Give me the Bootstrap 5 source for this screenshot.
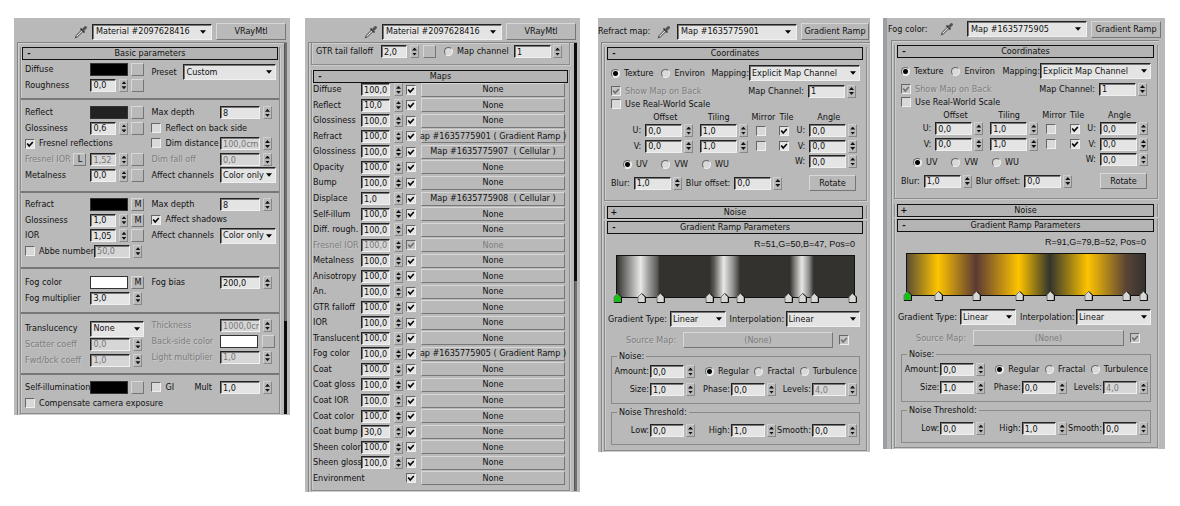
<!DOCTYPE html>
<html lang="en">
<head>
<meta charset="utf-8">
<meta name="viewport" content="width=device-width, initial-scale=1">
<title>VRayMtl material settings</title>
<link href="https://cdn.jsdelivr.net/npm/bootstrap@5.3.0/dist/css/bootstrap.min.css" rel="stylesheet">
<style>
  :root {
    --face: #b9b9b9;
    --field: #e4e4e4;
    --ink: #111;
    --off: #7e7e7e;
  }
  body {
    background: #fff;
    color: var(--ink);
    font-family: "DejaVu Sans Condensed", "Noto Sans", sans-serif;
    font-size: 9px;
    line-height: 11px;
  }
  .board {
    display: grid;
    grid-template-columns: 276fr 15px 275fr 18px 272fr 13px 282fr;
    align-items: start;
    padding: 18px 15px 14px 14px;
  }
  .board > .panel:nth-child(1) { grid-column: 1; }
  .board > .panel:nth-child(2) { grid-column: 3; }
  .board > .panel:nth-child(3) { grid-column: 5; }
  .board > .panel:nth-child(4) { grid-column: 7; }
  .panel { background: var(--face); min-width: 0; }
  label, .cap { white-space: nowrap; }
  .is-off { color: var(--off); text-shadow: 1px 1px 0 #c8c8c8; }

  /* toolbar */
  .toolbar-row { height: 24px; padding: 3px 4px 0 0; }
  .dropper { width: 14px; height: 14px; }
  .tb-select { width: 120px; flex: none; margin-right: 4px; }
  .tb-btn { width: 70px; height: 17px; flex: none; }

  /* controls */
  .form-control, .form-select {
    font-size: 9px; line-height: 11px; color: var(--ink);
    border-radius: 0; background-color: var(--field); min-width: 0;
    border: 1px solid; border-color: #222 #f0f0f0 #f0f0f0 #222;
    box-shadow: inset 1px 1px 0 #777;
  }
  .form-control { height: 13px; min-height: 0; padding: 0 0 0 2px; }
  .form-control:disabled { background: #d6d6d6; color: #777; }
  .form-select {
    height: 16px; padding: 0 0 0 2px;
    background-image: url("data:image/svg+xml,%3Csvg xmlns='http://www.w3.org/2000/svg' viewBox='0 0 7 4'%3E%3Cpath d='M0 0h7L3.500 4z'/%3E%3C/svg%3E");
    background-size: 6px 4px; background-position: right 3px center;
  }
  .tb-select { padding-left: 3px; background-position: right 5px center; }
  .btn {
    --bs-btn-border-radius: 0;
    --bs-btn-bg: var(--face);
    --bs-btn-disabled-bg: var(--face);
    --bs-btn-disabled-color: var(--off);
    --bs-btn-disabled-opacity: 1;
    --bs-btn-color: var(--ink);
    padding: 0; font-size: 9px; line-height: 11px; white-space: nowrap;
    border: 1px solid; border-color: #d8d8d8 #767676 #767676 #d8d8d8;
    background: var(--face);
  }
  .btn:disabled { border-color: #d8d8d8 #767676 #767676 #d8d8d8; }
  .btn-map { width: 13px; height: 13px; flex: none; }
  .numf { display: flex; gap: 2px; flex: none; align-items: center; }
  .numf > input { flex: 1 1 0; width: 0; }
  .spin {
    width: 9px; height: 13px; flex: none; display: flex; flex-direction: column; justify-content: center; gap: 2px;
    border: 1px solid; border-color: #d0d0d0 #888 #888 #d0d0d0;
  }
  .spin button { border: 0; padding: 0; background: none; height: 3px; width: 7px; display: block; }
  .spin button::before { content: ""; display: block; width: 5px; height: 3px; margin: 0 1px; background: #111; clip-path: polygon(50% 0, 100% 100%, 0 100%); }
  .spin button + button::before { clip-path: polygon(0 0, 100% 0, 50% 100%); }
  .form-check-input {
    width: 10px; height: 10px; margin: 0; float: none; flex: none; background-color: #d9d9d9;
    border: 1px solid; border-color: #666 #efefef #efefef #666; display: block;
  }
  .form-check-input[type=checkbox] { border-radius: 0; }
  .form-check-input:checked { background-color: #e4e4e4; border-color: #666 #efefef #efefef #666; }
  .form-check-input:checked[type=checkbox] { background-image: url("data:image/svg+xml,%3Csvg xmlns='http://www.w3.org/2000/svg' viewBox='0 0 10 10'%3E%3Cpath d='M1.500 4.500L4 7.500L8.500 2.500' fill='none' stroke='%23000' stroke-width='2'/%3E%3C/svg%3E"); background-size: 100%; }
  .form-check-input[type=radio] { width: 9px; height: 9px; }
  .form-check-input:checked[type=radio] { background-image: radial-gradient(circle, #000 2px, transparent 3px); background-size: 100%; }
  .form-check-input:disabled { opacity: 1; background-color: #c4c4c4; }
  .form-check-input:disabled:checked[type=checkbox] { background-image: url("data:image/svg+xml,%3Csvg xmlns='http://www.w3.org/2000/svg' viewBox='0 0 10 10'%3E%3Cpath d='M1.500 4.500L4 7.500L8.500 2.500' fill='none' stroke='%23707070' stroke-width='2'/%3E%3C/svg%3E"); }
  .form-check-input:disabled ~ label { opacity: 1; }
  .swatch { width: 38px; height: 13px; flex: none; padding: 0; border: 1px solid #333; background: #000; appearance: none; }
  .swatch::-webkit-color-swatch-wrapper { padding: 0; }
  .swatch::-webkit-color-swatch { border: 0; border-radius: 0; }

  /* rollouts */
  .frame { border: 1px solid #848484; border-width: 1px 0 0 1px; box-shadow: inset 1px 1px 0 #cfcfcf; margin: 0 3px; padding: 0 0 1px 2px; display: flex; gap: 4px; }
  .frame > .stack { flex: 1; min-width: 0; }
  .track { width: 3px; background: #707070; border-left: 1px solid #555; display: flex; flex-direction: column; }
  .thumb { height: 238px; background: #0c0c0c; margin-left: -1px; }
  .track.low .thumb { flex: 1; height: auto; margin-top: 278px; }
  .rollout { border: 1px solid #8b8b8b; border-top: 0; box-shadow: 1px 1px 0 #cdcdcd, inset 1px 0 0 #cdcdcd; }
  .rollout-head {
    display: grid; grid-template-columns: 12px 1fr 12px; width: calc(100% - 2px); margin: 0 1px;
    height: 13px; border: 1px solid #111; background: #b4b4b4; padding: 0; line-height: 11px; text-align: center; color: var(--ink);
  }
  .sign { font-weight: bold; }

  /* basic parameters */
  .sect { display: grid; grid-template-columns: 119fr 124fr; column-gap: 7px; padding: 5px 3px 0 4px; }
  .sect + .sect { border-top: 2px solid; border-image: linear-gradient(#777 50%, #c9c9c9 50%) 1; }
  .lines { display: grid; grid-auto-rows: minmax(0, 1fr); }
  .line { display: flex; align-items: center; min-width: 0; }
  .line > .lead-cap { flex: 1 1 0; min-width: 0; }
  .n2 { height: 31px; } .n3 { height: 47px; } .n4 { height: 62px; } .n5 { height: 78px; }
  .cell { width: 54px; flex: none; display: flex; align-items: center; gap: 3px; }
  .cell-r { width: 56px; flex: none; display: flex; align-items: center; }
  .w-s { width: 38px; gap: 3px; } .w-m { width: 52px; gap: 3px; } .w-c { width: 48px; }
  .w-sel { width: 56px; }
  .w-rest { flex: 1 1 0; gap: 3px; margin-right: 2px; }
  .s1 { padding-top: 2px; padding-bottom: 5px; }
  .s1 .preset-cap { width: 32px; flex: none; }
  .s1 .lines + .lines .line { height: 20px; }
  .s2 { padding-top: 5px; padding-bottom: 8px; }
  .s3 { padding-top: 4px; padding-bottom: 8px; }
  .s4 { padding-top: 6px; padding-bottom: 6px; }
  .s5 { padding-top: 7px; padding-bottom: 5px; }
  .s5 .lines + .lines { margin-top: -3px; }
  .s6 { padding-top: 5px; padding-bottom: 2px; }
  .s3 .lines + .lines { grid-template-rows: repeat(4, 1fr); }
  .s4 .lines + .lines, .s6 .lines + .lines { grid-template-rows: 1fr 1fr; }

  /* maps list */
  .gtr { height: 22px; padding: 0 7px 4px 4px; }
  .gtr-cap { flex: 0 0 65px; }
  .maps-roll { margin-top: 5px; }
  .map-list { display: grid; grid-auto-rows: minmax(0, 1fr); height: 404px; margin: -1px 0 4px; padding-left: 1px; }
  .map-line { display: grid; grid-template-columns: 48px 42px 3px 10px 5px 1fr; align-items: center; padding-right: 4px; }
  .map-line .numf { gap: 4px; }
  .map-line .btn { height: 14px; display: flex; justify-content: center; align-items: center; min-width: 0; }

  /* coordinates */
  .p-refr .frame { margin: 0 0 0 3px; }
  .p-refr .rollout { margin-right: 3px; }
  .p-refr .toolbar-row { padding-right: 1px; }
  .p-refr .tb-btn { width: 68px; }
  .p-refr .ramp-in { padding-bottom: 5px; }
  .p-fog { border-left: 4px solid #9a9fa3; }
  .p-fog .map-cap { padding-left: 1px; }
  .p-fog .toolbar-row { height: 22px; padding-top: 0; }
  .p-fog .frame { margin: 0 6px 0 4px; }
  .p-fog .rollout { margin-right: 1px; }
  .p-ramp .rollout-head { width: calc(100% - 5px); margin: 0 3px 0 2px; }
  .body-in { padding: 5px 6px 9px 6px; }
  .w-map { width: 111px; }
  .map-row { height: 16px; } .show-row { height: 14px; margin-top: 3px; } .real-row { height: 12px; margin-bottom: 2px; }
  .coord { display: grid; grid-template-columns: 35fr 56fr 53fr 19fr 18fr 16fr 52fr; grid-template-rows: 11px 15px 16px 15px; align-items: center; }
  .uv { grid-column: 1 / 6; align-self: end; gap: 14px; padding-left: 12px; margin-bottom: -1px; }
  .blur-row { height: 16px; margin-top: 6px; }
  .rotate { width: 47px; height: 16px; }
  .shut { margin-top: 5px; border-bottom: 0; }

  /* gradient ramp */
  .ramp-roll { margin-top: 2px; }
  .ramp-in { padding: 4px 6px 4px 3px; }
  .readout { font-family: "Liberation Sans", sans-serif; text-align: right; padding-right: 5px; line-height: 12px; }
  .ramp { position: relative; height: 43px; border: 1px solid #111; margin: 5px 5px 0 8px; }
  .stop { position: absolute; top: 37px; width: 9px; height: 10px; margin-left: -4px; display: block; }
  .type-row { margin-top: 13px; }
  .gt-cap { flex: 0 0 62px; } .ip-cap { flex: 0 0 60px; padding-left: 4px; }
  .sel-a { flex: 55 1 0; } .sel-b { flex: 75 1 0; }
  .src-row { margin-top: 5px; padding: 0 11px 0 18px; }
  .src-cap { width: 57px; flex: none; } .src-row .btn { height: 16px; } .src-row .form-check-input { margin-left: 6px; }
  fieldset { border: 1px solid #8a8a8a; margin: 0 0 0 3px; padding: 0 2px 0 0; }
  legend { float: none; width: auto; font-size: 9px; line-height: 10px; height: 10px; padding: 0 2px; margin: 0 0 0 5px; }
  .noise-grid { display: grid; grid-template-columns: 37fr 46px 35fr 46px 35fr 46px; align-items: center; }
  .noise-grid .numf { margin-left: 1px; }
  .noise-grid > label { justify-self: end; }
  .fs-noise { margin-top: 3px; height: 53px; } .fs-noise .noise-grid { margin-top: 4px; } .fs-noise .second { margin-top: 5px; }
  .fs-thr { margin-top: 3px; height: 38px; } .fs-thr .noise-grid { margin-top: 7px; }
  .kinds { grid-column: 3 / 7; display: flex; justify-content: space-between; padding-left: 10px; }
</style>
</head>
<body>
<main class="board" id="board"></main>

<script src="https://cdn.jsdelivr.net/npm/bootstrap@5.3.0/dist/js/bootstrap.bundle.min.js"></script>
<script>
  const dropper = `<svg class="dropper flex-shrink-0" viewBox="0 0 14 14" aria-hidden="true">
    <path d="M1.500 12.500L2.200 10.500L7.500 5L9 6.500L3.500 11.800Z" fill="#ddd" stroke="#444" stroke-width="1"/>
    <path d="M6.500 3.500L10.500 7.500" stroke="#222" stroke-width="1.500"/>
    <path d="M9 5L11.500 2.500" stroke="#555" stroke-width="3" stroke-linecap="round"/>
    <path d="M1 13.200L2 12.200" stroke="#333"/></svg>`;
  const off = d => d ? ' disabled' : '';
  const dim = d => d ? ' is-off' : '';
  const num = (id, v, cls, d, aria) => `<span class="numf ${cls}"><input type="text" class="form-control" id="${id}" value="${v}"${aria ? ` aria-label="${aria}"` : ''}${off(d)}><span class="spin"><button type="button" aria-label="Increase"></button><button type="button" aria-label="Decrease"></button></span></span>`;
  const select = (id, v, cls = '', aria = '') => `<select class="form-select ${cls}" id="${id}"${aria ? ` aria-label="${aria}"` : ''}><option>${v}</option></select>`;
  const mapBtn = (t = '') => `<button type="button" class="btn btn-map" aria-label="Map">${t}</button>`;
  const swatch = (id, c, d) => `<input type="color" class="swatch" id="${id}" value="${c}"${off(d)}>`;
  const lab = (id, t, cls = '') => `<label for="${id}" class="${cls}">${t}</label>`;
  const check = (id, t, on, d, gap = 'ms-1') => `<input type="checkbox" class="form-check-input" id="${id}"${on ? ' checked' : ''}${off(d)}>${lab(id, t, gap + dim(d))}`;
  const radio = (id, name, t, on) => `<span class="d-flex align-items-center gap-1"><input type="radio" class="form-check-input" name="${name}" id="${id}"${on ? ' checked' : ''}>${lab(id, t)}</span>`;
  const head = (t, sign = '-') => `<button type="button" class="rollout-head" aria-expanded="${sign === '-'}"><span class="sign">${sign}</span><span>${t}</span></button>`;
  const line = (...x) => `<div class="line">${x.join('')}</div>`;
  const left = (id, t, body, d) => line(lab(id, t, 'lead-cap' + dim(d)), `<span class="cell">${body}</span>`);
  const right = (id, t, body, d) => line(lab(id, t, 'lead-cap' + dim(d)), `<span class="cell-r">${body}</span>`);
  const sect = (n, l, r, pad = '') => `<div class="sect ${pad}"><div class="lines ${n}">${l.join('')}</div><div class="lines ${n}">${r.join('')}</div></div>`;
  const bar = (p, name, type) => `<div class="toolbar-row d-flex align-items-center">
      <span class="flex-grow-1 d-flex justify-content-end pe-1">${dropper}</span>
      ${select(p + 'name', name, 'tb-select', 'Name')}
      <button type="button" class="btn tb-btn">${type}</button></div>`;

  const basic = `<section class="panel p-basic">${bar('b', 'Material #2097628416', 'VRayMtl')}
    <div class="frame"><div class="stack pt-1"><div class="rollout">${head('Basic parameters')}
    ${sect('n2', [
      left('diff', 'Diffuse', swatch('diff', '#000000') + mapBtn()),
      left('rough', 'Roughness', num('rough', '0,0', 'w-s') + mapBtn())
    ], [ line(lab('preset', 'Preset', 'preset-cap'), select('preset', 'Custom')) ], 's1')}
    ${sect('n5', [
      left('refl', 'Reflect', swatch('refl', '#222222') + mapBtn()),
      left('rgl', 'Glossiness', num('rgl', '0,6', 'w-s') + mapBtn()),
      line(check('fres', 'Fresnel reflections', 1)),
      line(lab('fior', 'Fresnel IOR', 'lead-cap is-off'), '<button type="button" class="btn btn-map me-1">L</button>', `<span class="cell">${num('fior', '1,52', 'w-s', 1)}${mapBtn()}</span>`),
      left('metal', 'Metalness', num('metal', '0,0', 'w-s') + mapBtn())
    ], [
      right('rmax', 'Max depth', num('rmax', '8', 'w-m')),
      line(check('rback', 'Reflect on back side')),
      line(`<span class="lead-cap d-flex">${check('dimd', 'Dim distance')}</span>`, `<span class="cell-r">${num('dimv', '100,0cm', 'w-m', 1, 'Dim distance value')}</span>`),
      right('dimf', 'Dim fall off', num('dimf', '0,0', 'w-m', 1), 1),
      right('raff', 'Affect channels', select('raff', 'Color only', 'w-sel'))
    ], 's2')}
    ${sect('n4', [
      left('refr', 'Refract', swatch('refr', '#000000') + mapBtn('M')),
      left('tgl', 'Glossiness', num('tgl', '1,0', 'w-s') + mapBtn('M')),
      left('ior', 'IOR', num('ior', '1,05', 'w-s') + mapBtn()),
      line(check('abbe', 'Abbe number'), num('abbev', '50,0', 'w-rest', 1, 'Abbe number value'))
    ], [
      right('tmax', 'Max depth', num('tmax', '8', 'w-m')),
      line(check('shad', 'Affect shadows', 1)),
      right('taff', 'Affect channels', select('taff', 'Color only', 'w-sel'))
    ], 's3')}
    ${sect('n2', [
      left('fog', 'Fog color', swatch('fog', '#ffffff') + mapBtn('M')),
      left('fogm', 'Fog multiplier', num('fogm', '3,0', 'w-m'))
    ], [ right('fogb', 'Fog bias', num('fogb', '200,0', 'w-m')) ], 's4')}
    ${sect('n3', [
      left('trans', 'Translucency', select('trans', 'None', 'w-sel')),
      left('scat', 'Scatter coeff', num('scat', '0,0', 'w-m', 1), 1),
      left('fwd', 'Fwd/bck coeff', num('fwd', '1,0', 'w-m', 1), 1)
    ], [
      right('thick', 'Thickness', num('thick', '1000,0cm', 'w-m', 1), 1),
      right('backc', 'Back-side color', swatch('backc', '#ffffff') + '<span class="ms-1">' + mapBtn() + '</span>', 1),
      right('lmul', 'Light multiplier', num('lmul', '1,0', 'w-m', 1), 1)
    ], 's5')}
    ${sect('n2', [
      left('self', 'Self-illumination', swatch('self', '#000000') + mapBtn()),
      line(check('comp', 'Compensate camera exposure'))
    ], [ line(`<span class="lead-cap d-flex">${check('gi', 'GI')}<label for="mult" class="ms-auto me-2">Mult</label></span>`, `<span class="cell-r">${num('mult', '1,0', 'w-m')}</span>`) ], 's6')}
    </div></div><div class="track low"><div class="thumb"></div></div></div></section>`;

  const G1 = 'ap #1635775901 ( Gradient Ramp )', G2 = 'ap #1635775905 ( Gradient Ramp )';
  const maps = [
    ['Diffuse', '100,0'], ['Reflect', '10,0'], ['Glossiness', '100,0'], ['Refract', '100,0', G1],
    ['Glossiness', '100,0', 'Map #1635775907 &nbsp;( Cellular )'], ['Opacity', '100,0'], ['Bump', '100,0'],
    ['Displace', '1,0', 'Map #1635775908 &nbsp;( Cellular )'], ['Self-illum', '100,0'], ['Diff. rough.', '100,0'],
    ['Fresnel IOR', '100,0', 'None', 1], ['Metalness', '100,0'], ['Anisotropy', '100,0'], ['An.', '100,0'],
    ['GTR falloff', '100,0'], ['IOR', '100,0'], ['Translucent', '100,0'], ['Fog color', '100,0', G2],
    ['Coat', '100,0'], ['Coat gloss', '100,0'], ['Coat IOR', '100,0'], ['Coat color', '100,0'],
    ['Coat bump', '30,0'], ['Sheen color', '100,0'], ['Sheen gloss', '100,0'], ['Environment', '']
  ];
  const mapLine = ([t, v, m = 'None', d], i) => `<div class="map-line">${lab(v ? 'm' + i : 'mc' + i, t, dim(d))}
    ${v ? num('m' + i, v, '', d) : '<span></span>'}<span></span><input type="checkbox" class="form-check-input" id="mc${i}" aria-label="${t} enabled" checked${off(d)}><span></span>
    <button type="button" class="btn"${off(d)}>${m}</button></div>`;
  const mapPanel = `<section class="panel p-maps">${bar('m', 'Material #2097628416', 'VRayMtl')}
    <div class="frame"><div class="stack">
      <div class="rollout gtr d-flex align-items-center">${lab('gtr', 'GTR tail falloff', 'gtr-cap')}${num('gtr', '2,0', 'w-s')}<span class="ms-1 me-2">${mapBtn()}</span>
        ${radio('mapch', 'mapch', 'Map channel')}<span class="ms-auto">${num('mapchv', '1', 'w-c', 0, 'Map channel number')}</span></div>
      <div class="rollout maps-roll">${head('Maps')}<div class="map-list">${maps.map(mapLine).join('')}</div></div>
    </div><div class="track"><div class="thumb"></div></div></div></section>`;

  const rampPanel = o => {
    const p = o.id, f = (k, v, cls = '', d, a) => num(p + k, v, cls, d, a);
    const cb = (k, on, a) => `<input type="checkbox" class="form-check-input ms-1" id="${p + k}" aria-label="${a}"${on ? ' checked' : ''}>`;
    return `<section class="panel p-ramp ${o.cls}">
    <div class="toolbar-row d-flex align-items-center"><label for="${p}name" class="map-cap">${o.title}</label>
      <span class="flex-grow-1 d-flex justify-content-center">${dropper}</span>
      ${select(p + 'name', o.map, 'tb-select')}<button type="button" class="btn tb-btn">Gradient Ramp</button></div>
    <div class="frame"><div class="stack pt-1">
      <div class="rollout coords">${head('Coordinates')}
        <div class="body-in">
          <div class="line map-row"><span class="d-flex gap-2">${radio(p + 'tex', p + 'kind', 'Texture', 1)}${radio(p + 'env', p + 'kind', 'Environ')}</span>
            <label for="${p}mapping" class="ms-auto">Mapping:</label>${select(p + 'mapping', 'Explicit Map Channel', 'w-map')}</div>
          <div class="line show-row">${check(p + 'show', 'Show Map on Back', 1, 1)}<label for="${p}ch" class="ms-auto me-1">Map Channel:</label><span class="pe-1">${f('ch', '1', 'w-c')}</span></div>
          <div class="line real-row">${check(p + 'real', 'Use Real-World Scale')}</div>
          <div class="coord">
            <span></span><span class="cap ps-2">Offset</span><span class="cap ps-2">Tiling</span><span class="cap">Mirror</span><span class="cap ps-1">Tile</span><span></span><span class="cap ps-2">Angle</span>
            <label for="${p}uo" class="text-end pe-1">U:</label>${f('uo', '0,0', 'w-c')}${f('ut', '1,0', 'w-c', 0, 'U tiling')}${cb('um', 0, 'U mirror')}${cb('uti', 1, 'U tile')}<label for="${p}ua" class="text-end pe-1">U:</label>${f('ua', '0,0', 'w-c')}
            <label for="${p}vo" class="text-end pe-1">V:</label>${f('vo', '0,0', 'w-c')}${f('vt', '1,0', 'w-c', 0, 'V tiling')}${cb('vm', 0, 'V mirror')}${cb('vti', 1, 'V tile')}<label for="${p}va" class="text-end pe-1">V:</label>${f('va', '0,0', 'w-c')}
            <span class="uv d-flex">${radio(p + 'uv', p + 'plane', 'UV', 1)}${radio(p + 'vw', p + 'plane', 'VW')}${radio(p + 'wu', p + 'plane', 'WU')}</span>
            <label for="${p}wa" class="text-end pe-1">W:</label>${f('wa', '0,0', 'w-c')}
          </div>
          <div class="line blur-row">${lab(p + 'blur', 'Blur:', 'me-1')}${f('blur', '1,0', 'w-c')}${lab(p + 'bo', 'Blur offset:', 'ms-1 me-1')}${f('bo', '0,0', 'w-c')}<button type="button" class="btn rotate ms-auto me-1">Rotate</button></div>
        </div>
      </div>
      <div class="rollout shut">${head('Noise', '+')}</div>
      <div class="rollout ramp-roll">${head('Gradient Ramp Parameters')}
        <div class="ramp-in">
          <div class="readout">${o.readout}</div>
          <div class="ramp" style="background:linear-gradient(90deg,${o.grad})">${o.stops.map((s, i) => `<svg class="stop" style="left:${s}%" viewBox="0 0 9 10" aria-hidden="true"><path d="M4.500 0.500L8 4V9.500H1V4Z" fill="${i ? '#d8d8d4' : '#12c412'}" stroke="#777"/><path d="M5 0.500L8.500 4V9.500H1" fill="none" stroke="#111"/></svg>`).join('')}</div>
          <div class="line type-row">${lab(p + 'gt', 'Gradient Type:', 'gt-cap')}${select(p + 'gt', 'Linear', 'sel-a')}${lab(p + 'ip', 'Interpolation:', 'ip-cap')}${select(p + 'ip', 'Linear', 'sel-b')}</div>
          <div class="line src-row">${lab(p + 'src', 'Source Map:', 'src-cap is-off')}<button type="button" class="btn flex-grow-1" id="${p}src" disabled>(None)</button><input type="checkbox" class="form-check-input" aria-label="Use source map" checked disabled></div>
          <fieldset class="fs-noise"><legend>Noise:</legend>
            <div class="noise-grid">${lab(p + 'am', 'Amount:')}${f('am', '0,0')}<span class="kinds">${radio(p + 'reg', p + 'nk', 'Regular', 1)}${radio(p + 'fra', p + 'nk', 'Fractal')}${radio(p + 'tur', p + 'nk', 'Turbulence')}</span></div>
            <div class="noise-grid second">${lab(p + 'si', 'Size:')}${f('si', '1,0')}${lab(p + 'ph', 'Phase:')}${f('ph', '0,0')}${lab(p + 'le', 'Levels:')}${f('le', '4,0', '', 1)}</div>
          </fieldset>
          <fieldset class="fs-thr"><legend>Noise Threshold:</legend>
            <div class="noise-grid">${lab(p + 'lo', 'Low:')}${f('lo', '0,0')}${lab(p + 'hi', 'High:')}${f('hi', '1,0')}${lab(p + 'sm', 'Smooth:')}${f('sm', '0,0')}</div>
          </fieldset>
        </div>
      </div>
    </div></div></section>`;
  };

  document.getElementById('board').innerHTML = basic + mapPanel
    + rampPanel({ id: 'r', cls: 'p-refr', title: 'Refract map:', map: 'Map #1635775901', readout: 'R=51,G=50,B=47, Pos=0',
        grad: '#33322f 0%,#8f8f8d 5%,#e8e8e6 10%,#a5a5a3 13%,#5c5b58 17%,#33322f 18%,#33322f 39%,#5c5b58 41%,#e8e8e6 45%,#8f8f8d 49%,#33322f 52%,#33322f 73%,#5c5b58 74%,#e8e8e6 78%,#8f8f8d 81%,#33322f 83%,#33322f 100%',
        stops: [0, 10, 18, 39, 45, 52, 72, 78, 83, 99] })
    + rampPanel({ id: 'f', cls: 'p-fog', title: 'Fog color:', map: 'Map #1635775905', readout: 'R=91,G=79,B=52, Pos=0',
        grad: '#5b4f34 0%,#ffc400 13%,#5b3a34 29%,#ffc400 47%,#33342c 60%,#ffc400 76%,#5a4436 92%,#33322f 100%',
        stops: [0, 13, 29, 47, 60, 76, 92, 99] });
</script>
</body>
</html>
